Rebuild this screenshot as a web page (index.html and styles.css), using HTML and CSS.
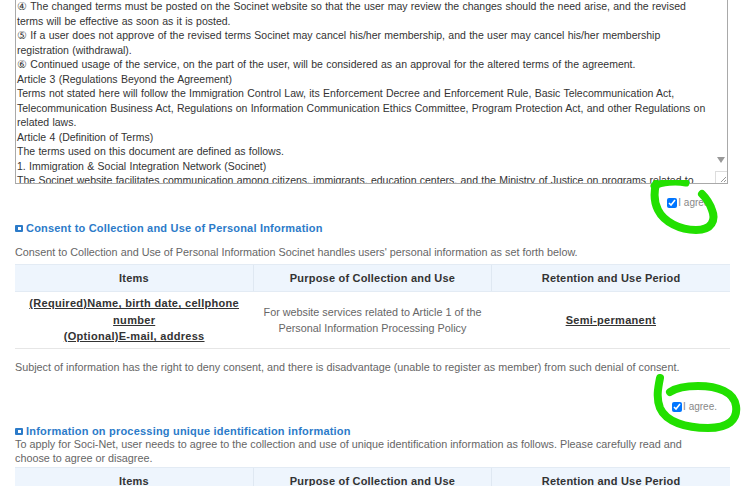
FILE: index.html
```html
<!DOCTYPE html>
<html lang="en">
<head>
    <meta charset="UTF-8">
    <meta name="viewport" content="width=device-width, initial-scale=1.0">
    <title>Socinet - Terms Agreement</title>
    <link rel="stylesheet" href="styles.css">
</head>
<body>
    <div class="page">
        <div class="terms">
            <div class="terms-text">
                <p>④ The changed terms must be posted on the Socinet website so that the user may review the changes should the need arise, and the revised terms will be effective as soon as it is posted.</p>
                <p>⑤ If a user does not approve of the revised terms Socinet may cancel his/her membership, and the user may cancel his/her membership registration (withdrawal).</p>
                <p>⑥ Continued usage of the service, on the part of the user, will be considered as an approval for the altered terms of the agreement.</p>
                <p>Article 3 (Regulations Beyond the Agreement)</p>
                <p>Terms not stated here will follow the Immigration Control Law, its Enforcement Decree and Enforcement Rule, Basic Telecommunication Act, Telecommunication Business Act, Regulations on Information Communication Ethics Committee, Program Protection Act, and other Regulations on related laws.</p>
                <p>Article 4 (Definition of Terms)</p>
                <p>The terms used on this document are defined as follows.</p>
                <p>1. Immigration &amp; Social Integration Network (Socinet)</p>
                <p>The Socinet website facilitates communication among citizens, immigrants, education centers, and the Ministry of Justice on programs related to</p>
            </div>
            <div class="scrollbar">
                <span class="arrow-down"></span>
                <span class="grip">
                    <svg width="8" height="8" viewBox="0 0 8 8"><path d="M7 2 L2 7 M7 5 L5 7" stroke="#999" stroke-width="1"/></svg>
                </span>
            </div>
        </div>

        <div class="agree agree-first">
            <label><input type="checkbox" checked>I agree .</label>
        </div>

        <h4 class="section-title"><span class="bullet"></span>Consent to Collection and Use of Personal Information</h4>
        <p class="desc">Consent to Collection and Use of Personal Information Socinet handles users' personal information as set forth below.</p>

        <table class="info-table">
            <thead>
                <tr>
                    <th>Items</th>
                    <th>Purpose of Collection and Use</th>
                    <th>Retention and Use Period</th>
                </tr>
            </thead>
            <tbody>
                <tr>
                    <td class="strong items">(Required)Name, birth date, cellphone number<br>(Optional)E-mail, address</td>
                    <td class="purpose">For website services related to Article 1 of the<br>Personal Information Processing Policy</td>
                    <td class="strong">Semi-permanent</td>
                </tr>
            </tbody>
        </table>

        <p class="desc deny">Subject of information has the right to deny consent, and there is disadvantage (unable to register as member) from such denial of consent.</p>

        <div class="agree agree-second">
            <label><input type="checkbox" checked>I agree.</label>
        </div>

        <h4 class="section-title tight"><span class="bullet"></span>Information on processing unique identification information</h4>
        <p class="desc intro">To apply for Soci-Net, user needs to agree to the collection and use of unique identification information as follows. Please carefully read and choose to agree or disagree.</p>

        <table class="info-table second">
            <thead>
                <tr>
                    <th>Items</th>
                    <th>Purpose of Collection and Use</th>
                    <th>Retention and Use Period</th>
                </tr>
            </thead>
        </table>

        <!-- hand drawn marks from the screenshot -->
        <svg class="mark mark-one" width="70" height="60" viewBox="0 0 70 60">
            <path d="M6 4 C4 12 3 20 8 30 C14 42 30 50 46 50 C62 50 66 40 62 30 C60 24 56 18 52 14" fill="none" stroke="#22e000" stroke-width="8" stroke-linecap="round"/>
            <path d="M4 6 C12 2 26 1 36 3" fill="none" stroke="#22e000" stroke-width="7" stroke-linecap="round"/>
        </svg>
        <svg class="mark mark-two" width="90" height="60" viewBox="0 0 90 60">
            <path d="M8 4 C6 14 4 24 8 34 C14 48 34 54 56 54 C76 54 86 46 84 32 C82 18 66 12 46 12 C34 12 24 14 18 18" fill="none" stroke="#22e000" stroke-width="8" stroke-linecap="round"/>
        </svg>
    </div>
</body>
</html>
```

FILE: styles.css
```css
body {
    margin: 0;
    background: #fff;
    font-family: "Liberation Sans", Arial, sans-serif;
    font-size: 10.8px;
    color: #666;
}
.page {
    position: relative;
    width: 741px;
    height: 486px;
    overflow: hidden;
}
.terms {
    display: flex;
    width: 713px;
    height: 184px;
    margin-left: 15px;
    border: 1px solid #a9a9a9;
    border-top: none;
    box-sizing: border-box;
    overflow: hidden;
}
.terms-text {
    width: 694px;
    padding: 0 4px 0 1px;
    margin-top: -1px;
    color: #333;
    font-size: 10.5px;
    line-height: 14.5px;
    word-spacing: 0.4px;
}
.terms-text p {
    margin: 0;
}
.scrollbar {
    width: 12px;
    display: flex;
    flex-direction: column;
    justify-content: flex-end;
    align-items: center;
    background: #fff;
}
.arrow-down {
    width: 0;
    height: 0;
    border-left: 4px solid transparent;
    border-right: 4px solid transparent;
    border-top: 6px solid #999;
    margin-bottom: 8px;
}
.grip {
    width: 12px;
    height: 12px;
    display: flex;
    align-items: flex-end;
    justify-content: flex-end;
    border-top: 1px solid #ddd;
    border-left: 1px solid #ddd;
    box-sizing: border-box;
}
.agree {
    display: flex;
    justify-content: flex-end;
    color: #888;
    font-size: 10px;
}
.agree label {
    display: flex;
    align-items: center;
}
.agree input {
    width: 10px;
    height: 10px;
    margin: 0 1px 0 0;
}
.agree-first {
    margin-top: 13px;
    padding-right: 26px;
}
.agree-second {
    margin-top: 27px;
    padding-right: 24px;
}
.section-title {
    display: flex;
    align-items: center;
    margin: 14px 0 0 15px;
    font-size: 11px;
    font-weight: bold;
    color: #2c7bc9;
    letter-spacing: 0.2px;
}
.section-title.tight {
    margin-top: 13px;
}
.bullet {
    position: relative;
    width: 8px;
    height: 7px;
    margin-right: 3px;
    background: #2c7bc9;
    border-radius: 1px;
}
.bullet::after {
    content: "";
    position: absolute;
    left: 3px;
    top: 2px;
    width: 3px;
    height: 3px;
    background: #fff;
}
.desc {
    margin: 11px 0 0 15px;
    line-height: 14px;
}
.desc.deny {
    margin-top: 11px;
}
.desc.intro {
    margin: 0 40px 0 15px;
}
.info-table {
    width: 715px;
    margin: 5px 0 0 15px;
    border-collapse: collapse;
    table-layout: fixed;
}
.info-table.second {
    margin-top: 2px;
}
.info-table th {
    height: 26px;
    padding: 0;
    background: #eef5fd;
    border-top: 1px solid #e3ebf4;
    border-bottom: 1px solid #e3ebf4;
    border-left: 1px solid #dfe8f2;
    color: #333;
    font-size: 11px;
    font-weight: bold;
    letter-spacing: 0.2px;
}
.info-table th:first-child {
    border-left: none;
}
.info-table td {
    height: 56px;
    padding: 0 6px;
    text-align: center;
    line-height: 16.5px;
    border-bottom: 1px solid #e6e6e6;
}
.info-table td.strong {
    color: #333;
    font-size: 11px;
    font-weight: bold;
    letter-spacing: 0.3px;
    text-decoration: underline;
}
.info-table td.items {
    padding: 0 14px;
}
.info-table td.purpose {
    padding: 0 2px;
    white-space: nowrap;
}
.mark {
    position: absolute;
}
.mark-one {
    left: 650px;
    top: 180px;
}
.mark-two {
    left: 652px;
    top: 374px;
}
```
